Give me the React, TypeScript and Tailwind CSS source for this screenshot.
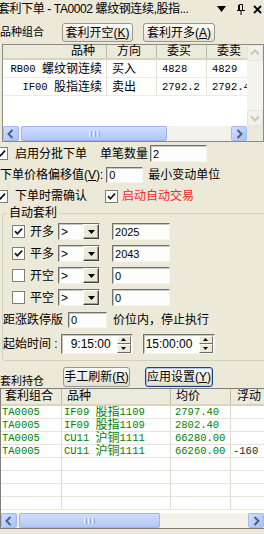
import React from 'react';

const SANS = "font-['Liberation_Sans','Noto_Sans_CJK_SC',sans-serif]";
const MONO = "font-['Liberation_Mono','Noto_Sans_CJK_SC',monospace]";

// Latin parts in a SimSun-like mono, CJK parts a bit larger
const Mixed = ({ text }: { text: string }) => (
  <>
    {text
      .split(/([\u4e00-\u9fff]+)/)
      .filter(Boolean)
      .map((part, i) =>
        /[\u4e00-\u9fff]/.test(part) ? (
          <span key={i} className="text-[12px]">{part}</span>
        ) : (
          <span key={i} className={`${MONO} whitespace-pre text-[10.5px]`}>{part}</span>
        )
      )}
  </>
);

const CheckBox = ({ checked, className = '' }: { checked?: boolean; className?: string }) => (
  <span className={`flex h-[13px] w-[13px] shrink-0 items-center justify-center border border-[#7f7f78] bg-white ${className}`}>
    {checked && (
      <svg width="9" height="9" viewBox="0 0 9 9">
        <path d="M1 4.2 L3.4 6.8 L8 1.6" fill="none" stroke="#151515" strokeWidth="1.7" />
      </svg>
    )}
  </span>
);

const Button = ({ label, hotkey, focused, className = '' }: { label: string; hotkey: string; focused?: boolean; className?: string }) => (
  <div
    className={`flex items-center justify-center rounded-[3px] border bg-linear-to-b from-[#fdfdfb] to-[#e2dfd2] text-[12px] leading-[14px] ${
      focused ? 'border-[#22407a] shadow-[inset_0_0_0_1px_#b3c7ec]' : 'border-[#9a988c]'
    } ${className}`}
  >
    {label}(<span className="underline">{hotkey}</span>)
  </div>
);

const sunken =
  'border border-t-[#717171] border-l-[#717171] border-r-[#f4f3ee] border-b-[#f4f3ee] bg-[#fdfdfb] shadow-[inset_1px_1px_0_#c9c7bd]';

const Field = ({ value, className = '' }: { value: string; className?: string }) => (
  <div className={`flex items-center pl-[2px] text-[11px] ${sunken} ${className}`}>{value}</div>
);

const Combo = ({ className = '' }: { className?: string }) => (
  <div className={`flex h-[17px] w-[42px] shrink-0 ${sunken} ${className}`}>
    <span className="flex flex-1 items-center pl-[2px] text-[12px]">&gt;</span>
    <span className="flex w-[16px] items-center justify-center border border-t-white border-l-white border-r-[#404040] border-b-[#404040] bg-[#ece9d8] shadow-[inset_-1px_-1px_0_#a09e92]">
      <svg width="7" height="4" viewBox="0 0 7 4">
        <path d="M0 0h7L3.5 4z" fill="#000" />
      </svg>
    </span>
  </div>
);

const SpinHalf = ({ up }: { up?: boolean }) => (
  <div className="flex flex-1 items-center justify-center border border-t-white border-l-white border-r-[#6f6f6f] border-b-[#6f6f6f] bg-[#ece9d8]">
    <svg width="5" height="3" viewBox="0 0 5 3">
      <path d={up ? 'M0 3h5L2.5 0z' : 'M0 0h5L2.5 3z'} fill="#000" />
    </svg>
  </div>
);

const TimeBox = ({ value, pad, className = '' }: { value: string; pad: string; className?: string }) => (
  <div className={`flex h-[20px] w-[72px] shrink-0 items-center ${sunken} ${className}`}>
    <span className={`flex-1 text-[12px] ${pad}`}>{value}</span>
    <div className="mr-[1px] flex h-[17px] w-[14px] flex-col">
      <SpinHalf up />
      <SpinHalf />
    </div>
  </div>
);

const chevrons = {
  l: 'M9.5 4 L5.5 8 L9.5 12',
  r: 'M6.5 4 L10.5 8 L6.5 12',
  u: 'M4 9.5 L8 5.5 L12 9.5',
  d: 'M4 6.5 L8 10.5 L12 6.5',
};

const ScrollBtn = ({ dir, off, className = '' }: { dir: 'l' | 'r' | 'u' | 'd'; off?: boolean; className?: string }) => (
  <div
    className={`flex shrink-0 items-center justify-center rounded-[2px] border ${
      off ? 'border-[#e6e4da] bg-[#f1f0ea]' : 'border-[#a3baee] bg-linear-to-br from-[#d2defd] to-[#a9c0f4]'
    } ${className}`}
  >
    <svg width="12" height="12" viewBox="2 2 12 12">
      <path d={chevrons[dir]} fill="none" stroke={off ? '#cbc8ba' : '#4d6185'} strokeWidth="2" />
    </svg>
  </div>
);

const HScroll = ({ thumb, className = '' }: { thumb: string; className?: string }) => (
  <div className={`flex h-[15px] shrink-0 bg-[#f3f1ea] ${className}`}>
    <ScrollBtn dir="l" className="h-[15px] w-[16px]" />
    <div className={`ml-[2px] flex items-center justify-center rounded-[2px] border border-[#9db5ec] bg-linear-to-b from-[#d0ddfd] to-[#b3c7f7] ${thumb}`}>
      <div className="flex h-[6px] gap-[1px]">
        <span className="w-[1px] bg-[#eef3fe]" />
        <span className="w-[1px] bg-[#8fa9e6]" />
        <span className="w-[1px] bg-[#eef3fe]" />
        <span className="w-[1px] bg-[#8fa9e6]" />
        <span className="w-[1px] bg-[#eef3fe]" />
        <span className="w-[1px] bg-[#8fa9e6]" />
      </div>
    </div>
    <div className="flex-1" />
    <ScrollBtn dir="r" className="h-[15px] w-[16px]" />
  </div>
);

const quotes = [
  { name: 'RB00 螺纹钢连续', dir: '买入', bid: '4828', ask: '4829' },
  { name: 'IF00 股指连续', dir: '卖出', bid: '2792.2', ask: '2792.4' },
];

const rules = [
  { label: '开多', on: true, v: '2025' },
  { label: '平多', on: true, v: '2043' },
  { label: '开空', on: false, v: '0' },
  { label: '平空', on: false, v: '0' },
];

const positions = [
  { group: 'TA0005', name: 'IF09 股指1109', price: '2797.40', pnl: '' },
  { group: 'TA0005', name: 'IF09 股指1109', price: '2802.40', pnl: '' },
  { group: 'TA0005', name: 'CU11 沪铜1111', price: '66280.00', pnl: '' },
  { group: 'TA0005', name: 'CU11 沪铜1111', price: '66260.00', pnl: '-160' },
];

const PosRow = ({ p }: { p?: (typeof positions)[number] }) => (
  <div className="flex h-[13px] shrink-0 items-center border-b border-[#e8e5d8] whitespace-nowrap text-[#008000]">
    <div className="flex h-full w-[61px] items-center border-r border-[#dedbcc] pl-[1px]">{p && <Mixed text={p.group} />}</div>
    <div className="flex h-full w-[109px] items-center border-r border-[#dedbcc] pl-[2px]">{p && <Mixed text={p.name} />}</div>
    <div className="flex h-full w-[60px] items-center border-r border-[#dedbcc] pl-[4px]">{p && <Mixed text={p.price} />}</div>
    <div className="flex h-full flex-1 items-center pl-[2px] text-[#1e1e1e]">{p && <Mixed text={p.pnl} />}</div>
  </div>
);

export default function App() {
  return (
    <div className={`flex h-[534px] w-[264px] flex-col overflow-hidden bg-[#ece9d8] text-[12px] leading-[14px] text-black ${SANS}`}>
      {/* title bar */}
      <div className="flex h-[18px] shrink-0 items-center">
        <span className="-ml-[2px] min-w-0 flex-1 whitespace-nowrap tracking-[-0.4px]">套利下单 - TA0002 螺纹钢连续,股指...</span>
        <svg width="9" height="6" viewBox="0 0 9 6" className="shrink-0">
          <path d="M0 0h9L4.5 6z" fill="#000" />
        </svg>
        <svg width="8" height="11" viewBox="0 0 8 11" className="ml-[11px] shrink-0">
          <path d="M2.5 0.5h3v6h-3z M1.5 1v5.5 M0 6.5h8 M4 7v4" fill="none" stroke="#000" />
        </svg>
        <svg width="9" height="9" viewBox="0 0 9 9" className="ml-[8px] mr-[2px] shrink-0">
          <path d="M1 1 L8 8 M8 1 L1 8" stroke="#000" strokeWidth="1.8" />
        </svg>
      </div>

      {/* combo buttons */}
      <div className="flex h-[26px] shrink-0 items-end pb-[2px]">
        <span className="mb-[3px] w-[62px] text-[11px]">品种组合</span>
        <Button label="套利开空" hotkey="K" className="h-[19px] w-[71px]" />
        <Button label="套利开多" hotkey="A" className="ml-[10px] h-[19px] w-[72px]" />
      </div>

      {/* quote list */}
      <div className="ml-[2px] flex h-[98px] w-[262px] shrink-0 flex-col border border-[#8a8a86] bg-white">
        <div className="flex h-[81px] shrink-0">
          <div className="flex w-[244px] flex-col">
            <div className="flex h-[15px] shrink-0 border-b-2 border-[#d8d4c4] bg-[#ebeadb] leading-[13px]">
              <div className="w-[104px] border-r border-[#bdbaa9] pr-[11px] text-right">品种</div>
              <div className="w-[50px] border-r border-[#bdbaa9] pl-[10px]">方向</div>
              <div className="w-[50px] border-r border-[#bdbaa9] pl-[10px]">委买</div>
              <div className="flex-1 pl-[10px]">委卖</div>
            </div>
            {quotes.map((q) => (
              <div key={q.name} className="flex h-[18px] shrink-0 items-center border-b border-[#eeebe0] whitespace-nowrap">
                <div className="flex h-full w-[104px] items-center justify-end border-r border-[#e4e1d4] pr-[4px]">
                  <Mixed text={q.name} />
                </div>
                <div className="flex h-full w-[50px] items-center border-r border-[#e4e1d4] pl-[5px]">{q.dir}</div>
                <div className="flex h-full w-[50px] items-center border-r border-[#e4e1d4] pl-[5px]">
                  <Mixed text={q.bid} />
                </div>
                <div className="flex h-full flex-1 items-center overflow-hidden pl-[5px]">
                  <Mixed text={q.ask} />
                </div>
              </div>
            ))}
          </div>
          <div className="flex w-[16px] flex-col bg-[#f4f3ee]">
            <ScrollBtn dir="u" off className="h-[16px] w-[16px]" />
            <div className="flex-1" />
            <ScrollBtn dir="d" off className="h-[16px] w-[16px]" />
          </div>
        </div>
        <div className="flex h-[15px] shrink-0">
          <HScroll thumb="w-[146px]" className="w-[244px]" />
          <div className="w-[16px] bg-[#ece9d8]" />
        </div>
      </div>

      {/* order options */}
      <div className="mt-[3px] flex h-[17px] shrink-0 items-center">
        <CheckBox checked className="-ml-[5px]" />
        <span className="ml-[7px]">启用分批下单</span>
        <span className="ml-[13px]">单笔数量</span>
        <Field value="2" className="ml-[2px] h-[17px] w-[57px]" />
      </div>
      <div className="mt-[5px] flex h-[16px] shrink-0 items-center">
        <span className="whitespace-nowrap">
          下单价格偏移值(<span className="underline">V</span>):
        </span>
        <Field value="0" className="ml-[3px] h-[16px] w-[37px]" />
        <span className="ml-[5px]">最小变动单位</span>
      </div>
      <div className="mt-[5px] flex h-[16px] shrink-0 items-center">
        <CheckBox checked className="-ml-[5px]" />
        <span className="ml-[7px]">下单时需确认</span>
        <CheckBox checked className="ml-[18px]" />
        <span className="ml-[4px] text-[#f02a2a]">启动自动交易</span>
      </div>

      {/* auto arbitrage group */}
      <fieldset className="ml-[2px] mt-[2px] w-[272px] shrink-0 rounded-[3px] border border-[#d0d0bf] pb-[6px]">
        <legend className="ml-[4px] px-[2px] leading-[14px]">自动套利</legend>
        <div className="mt-[3px] flex flex-col gap-[5px]">
          {rules.map((r) => (
            <div key={r.label} className="flex h-[17px] items-center">
              <CheckBox checked={r.on} className="ml-[9px]" />
              <span className="ml-[5px]">{r.label}</span>
              <Combo className="ml-[4px]" />
              <Field value={r.v} className="ml-[12px] h-[17px] w-[58px]" />
            </div>
          ))}
        </div>
        <div className="mt-[6px] flex h-[16px] items-center">
          <span>距涨跌停版</span>
          <Field value="0" className="ml-[5px] h-[16px] w-[39px]" />
          <span className="ml-[6px]">价位内，停止执行</span>
        </div>
        <div className="mt-[6px] flex h-[20px] items-center">
          <span className="whitespace-nowrap">起始时间 :</span>
          <TimeBox value="9:15:00" pad="pl-[9px]" className="ml-[3px]" />
          <TimeBox value="15:00:00" pad="pl-[2px]" className="ml-[10px]" />
        </div>
      </fieldset>

      {/* positions header */}
      <div className="mt-[1px] flex h-[26px] shrink-0 items-end pb-[1px]">
        <span className="-mb-[1px] w-[63px] text-[11px]">套利持仓</span>
        <Button label="手工刷新" hotkey="R" className="h-[20px] w-[67px]" />
        <Button label="应用设置" hotkey="Y" focused className="ml-[15px] h-[20px] w-[68px]" />
      </div>

      {/* positions list fills the rest of the window */}
      <div className="mb-[5px] flex min-h-0 w-[264px] flex-1 flex-col border border-r-0 border-[#7f7f7f] bg-white">
        <div className="flex h-[17px] shrink-0 border-b-2 border-[#d8d4c4] bg-[#ebeadb] leading-[15px]">
          <div className="w-[61px] border-r border-[#bdbaa9] pl-[4px]">套利组合</div>
          <div className="w-[109px] border-r border-[#bdbaa9] pl-[5px]">品种</div>
          <div className="w-[60px] border-r border-[#bdbaa9] pl-[5px]">均价</div>
          <div className="flex-1 pl-[6px]">浮动</div>
        </div>
        <div className="flex min-h-0 flex-1 flex-col overflow-hidden">
          {positions.map((p, i) => (
            <PosRow key={i} p={p} />
          ))}
          <PosRow />
          <PosRow />
          <PosRow />
          <PosRow />
        </div>
        <HScroll thumb="w-[141px]" />
      </div>
    </div>
  );
}
